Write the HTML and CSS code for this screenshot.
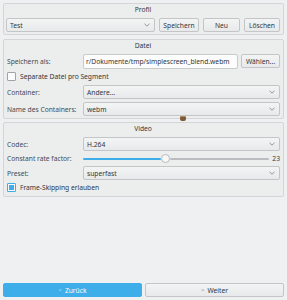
FILE: index.html
```html
<!DOCTYPE html>
<html>
<head>
<meta charset="utf-8">
<link rel="stylesheet" href="styles.css">
</head>
<body>
<div class="page">
  <section class="group g-profil">
    <div class="gtitle">Profil</div>
    <div class="row">
      <div class="combo flex1"><span>Test</span><svg class="chev" viewBox="0 0 6 4"><path d="M0.5 0.8 L3 3.2 L5.5 0.8" /></svg></div>
      <div class="btn w-speichern">Speichern</div>
      <div class="btn w-neu">Neu</div>
      <div class="btn w-loeschen">Löschen</div>
    </div>
  </section>

  <section class="group g-datei">
    <div class="gtitle">Datei</div>
    <div class="row">
      <div class="label">Speichern als:</div>
      <div class="edit flex1">r/Dokumente/tmp/simplescreen_blend.webm</div>
      <div class="btn w-waehlen">Wählen...</div>
    </div>
    <div class="crow">
      <span class="cbox"></span><span>Separate Datei pro Segment</span>
    </div>
    <div class="row">
      <div class="label">Container:</div>
      <div class="combo flex1"><span>Andere...</span><svg class="chev" viewBox="0 0 6 4"><path d="M0.5 0.8 L3 3.2 L5.5 0.8" /></svg></div>
    </div>
    <div class="row">
      <div class="label">Name des Containers:</div>
      <div class="combo flex1"><span>webm</span><svg class="chev" viewBox="0 0 6 4"><path d="M0.5 0.8 L3 3.2 L5.5 0.8" /></svg></div>
    </div>
  </section>

  <section class="group g-video">
    <div class="gtitle">Video</div>
    <div class="row">
      <div class="label">Codec:</div>
      <div class="combo flex1"><span>H.264</span><svg class="chev" viewBox="0 0 6 4"><path d="M0.5 0.8 L3 3.2 L5.5 0.8" /></svg></div>
    </div>
    <div class="row srow">
      <div class="label">Constant rate factor:</div>
      <div class="slider flex1">
        <div class="fill"></div>
        <div class="handle"></div>
        <div class="groove"></div>
      </div>
      <div class="sval">23</div>
    </div>
    <div class="row">
      <div class="label">Preset:</div>
      <div class="combo flex1"><span>superfast</span><svg class="chev" viewBox="0 0 6 4"><path d="M0.5 0.8 L3 3.2 L5.5 0.8" /></svg></div>
    </div>
    <div class="crow">
      <span class="cbox checked"></span><span>Frame-Skipping erlauben</span>
    </div>
  </section>

  <div class="spacer"></div>

  <div class="nav">
    <div class="navbtn primary"><span class="arr">&lt;</span> Zurück</div>
    <div class="navbtn"><span class="arr">&gt;</span> Weiter</div>
  </div>

  <div class="cursor-icon"></div>
</div>
</body>
</html>
```

FILE: styles.css
```css
html, body {
  margin: 0;
  padding: 0;
  background: #eff0f1;
}
body {
  font-family: "Noto Sans", "DejaVu Sans", sans-serif;
  font-size: 6.7px;
  color: #31363b;
}
.page {
  position: relative;
  width: 287px;
  height: 300px;
  box-sizing: border-box;
  padding: 3px 3px 3px 3px;
  display: flex;
  flex-direction: column;
}
.group {
  border: 1px solid #d4d5d6;
  border-radius: 2px;
  background: #eceded;
  padding: 0 3px 2px 2px;
  display: flex;
  flex-direction: column;
  gap: 3px;
}
.g-datei { margin-top: 4px; }
.g-video { margin-top: 3px; gap: 2px; padding-bottom: 3px; }
.gtitle {
  height: 12px;
  line-height: 12px;
  text-align: center;
  color: #31363b;
  margin-bottom: -2px;
}
.g-profil .gtitle { height: 13px; line-height: 12px; }
.g-datei .gtitle { height: 13px; }
.g-video .gtitle { height: 12px; margin-bottom: 0; }
.row {
  display: flex;
  align-items: center;
  gap: 3px;
  height: 14px;
}
.row .label {
  width: 73px;
  flex: none;
  padding-left: 1px;
  color: #454a4f;
  white-space: nowrap;
}
.flex1 { flex: 1; min-width: 0; }
.combo, .btn, .edit {
  box-sizing: border-box;
  height: 14px;
  border: 1px solid #c3c5c7;
  border-radius: 2px;
  background: linear-gradient(#f3f4f4, #e8e9ea);
  display: flex;
  align-items: center;
  padding: 0 3px;
  white-space: nowrap;
  overflow: hidden;
}
.combo { justify-content: space-between; }
.g-profil .row { gap: 4px; }
.chev {
  width: 6px;
  height: 4px;
  flex: none;
  margin-right: 1px;
}
.chev path {
  fill: none;
  stroke: #7a7e82;
  stroke-width: 0.8;
}
.btn { justify-content: center; flex: none; }
.w-speichern { width: 40px; }
.w-neu { width: 37px; }
.w-loeschen { width: 36px; }
.w-waehlen { width: 39px; }
.edit {
  background: #fcfcfc;
  border-color: #c7c9cb;
  height: 15px;
  padding-left: 2px;
}
.crow {
  display: flex;
  align-items: center;
  gap: 4px;
  height: 11px;
  padding-left: 1px;
}
.cbox {
  width: 7px;
  height: 7px;
  border: 1px solid #9fa3a7;
  border-radius: 1px;
  background: #fcfcfc;
  box-sizing: content-box;
}
.cbox.checked {
  background: #3daee9;
  border-color: #3daee9;
  box-shadow: inset 0 0 0 1px #fcfcfc;
}
.srow { height: 11px; gap: 0; }
.srow .label { margin-right: 3px; }
.slider {
  position: relative;
  display: flex;
  align-items: center;
  height: 11px;
}
.fill {
  width: 78px;
  height: 2px;
  background: #3daee9;
  border-radius: 1px;
}
.handle {
  width: 7px;
  height: 7px;
  border: 1px solid #b8bcc0;
  border-radius: 50%;
  background: #f7f7f7;
  flex: none;
}
.groove {
  flex: 1;
  height: 2px;
  background: #babdc0;
  border-radius: 1px;
}
.sval {
  width: 11px;
  text-align: right;
  flex: none;
}
.spacer { flex: 1; }
.nav {
  display: flex;
  gap: 3px;
  height: 14px;
}
.navbtn {
  flex: 1;
  box-sizing: border-box;
  border: 1px solid #c3c5c7;
  border-radius: 2px;
  background: linear-gradient(#f3f4f4, #e8e9ea);
  display: flex;
  align-items: center;
  justify-content: center;
  gap: 3px;
  color: #31363b;
}
.navbtn.primary {
  background: #3daee9;
  border-color: #3daee9;
  color: #fcfcfc;
}
.arr { font-size: 6px; color: #7a7e82; }
.primary .arr { color: #cde9f8; }
.cursor-icon {
  position: absolute;
  left: 180px;
  top: 117px;
  width: 6px;
  height: 4px;
  border-radius: 1px 1px 2px 2px;
  background: #7c5a3a;
  box-shadow: 0 -1px 0 #b08a5a;
}
```
